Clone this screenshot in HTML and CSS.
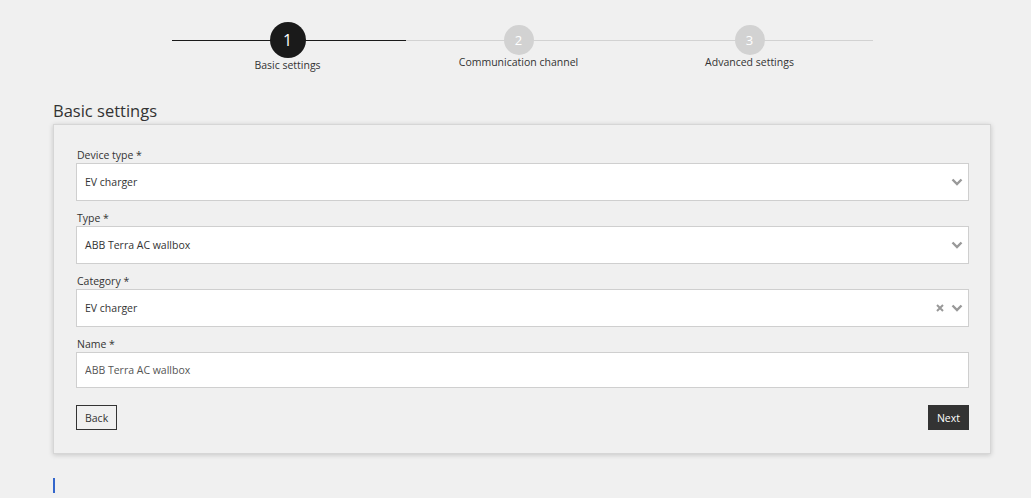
FILE: index.html
```html
<!DOCTYPE html>
<html lang="en">
<head>
<meta charset="UTF-8">
<meta name="viewport" content="width=device-width, initial-scale=1.0">
<title>Add device</title>
<link rel="stylesheet" href="styles.css">
</head>
<body>
    <div class="stepper">
        <div class="step active">
            <span class="dot">1</span>
            <span class="step-label">Basic settings</span>
        </div>
        <div class="step">
            <span class="dot">2</span>
            <span class="step-label">Communication channel</span>
        </div>
        <div class="step">
            <span class="dot">3</span>
            <span class="step-label">Advanced settings</span>
        </div>
    </div>

    <div class="page">
        <h2 class="title">Basic settings</h2>
        <div class="card">
            <div class="field">
                <label>Device type *</label>
                <div class="select">
                    <span>EV charger</span>
                    <span class="icons">
                        <svg class="chevron" width="12" height="8" viewBox="0 0 12 8"><path d="M1.5 1.5 L6 6 L10.5 1.5" fill="none" stroke="#999" stroke-width="2.4"/></svg>
                    </span>
                </div>
            </div>
            <div class="field">
                <label>Type *</label>
                <div class="select">
                    <span>ABB Terra AC wallbox</span>
                    <span class="icons">
                        <svg class="chevron" width="12" height="8" viewBox="0 0 12 8"><path d="M1.5 1.5 L6 6 L10.5 1.5" fill="none" stroke="#999" stroke-width="2.4"/></svg>
                    </span>
                </div>
            </div>
            <div class="field">
                <label>Category *</label>
                <div class="select">
                    <span>EV charger</span>
                    <span class="icons">
                        <svg class="clear" width="8" height="8" viewBox="0 0 8 8"><path d="M1 1 L7 7 M7 1 L1 7" fill="none" stroke="#999" stroke-width="2"/></svg>
                        <svg class="chevron" width="12" height="8" viewBox="0 0 12 8"><path d="M1.5 1.5 L6 6 L10.5 1.5" fill="none" stroke="#999" stroke-width="2.4"/></svg>
                    </span>
                </div>
            </div>
            <div class="field">
                <label>Name *</label>
                <input class="input" type="text" value="ABB Terra AC wallbox">
            </div>
            <div class="actions">
                <button class="btn">Back</button>
                <button class="btn primary">Next</button>
            </div>
        </div>
        <div class="caret"></div>
    </div>
</body>
</html>
```

FILE: styles.css
```css
:root {
    --bg-color: #f0f0f0;
    --text-color: #333;
    --line-color: #d2d2d2;
    --field-border: #cfcfcf;
}
body {
    margin: 0;
    background-color: var(--bg-color);
    font-family: "Open Sans", Arial, sans-serif;
    color: var(--text-color);
}
.stepper {
    position: relative;
    display: flex;
    width: 701px;
    margin: 22px 0 0 172px;
}
.stepper::before {
    content: "";
    position: absolute;
    top: 18px;
    left: 0;
    right: 0;
    height: 1px;
    background: var(--line-color);
}
.step {
    position: relative;
    width: 231px;
    display: flex;
    flex-direction: column;
    align-items: center;
}
.step.active::before {
    content: "";
    position: absolute;
    top: 18px;
    left: 0;
    width: 234px;
    height: 1px;
    background: #1a1a1a;
}
.dot {
    position: relative;
    width: 30px;
    height: 30px;
    margin-top: 3px;
    border-radius: 50%;
    background: #d2d2d2;
    color: white;
    font-size: 13px;
    display: flex;
    justify-content: center;
    align-items: center;
}
.active .dot {
    width: 36px;
    height: 36px;
    margin-top: 0;
    background: #1a1a1a;
    font-size: 16px;
}
.step-label {
    font-size: 10.5px;
    line-height: 14px;
    color: #333;
}
.page {
    width: 938px;
    margin: 0 0 0 53px;
}
.title {
    margin: 27px 0 1px;
    font-size: 16.5px;
    font-weight: normal;
    line-height: 24px;
    color: #333;
}
.card {
    border: 1px solid #d6d6d6;
    box-shadow: 0 1px 5px rgba(0, 0, 0, 0.18);
    padding: 22px 21px 23px 22px;
}
.field {
    margin-bottom: 9px;
}
.field label {
    display: block;
    padding-left: 1px;
    font-size: 10.5px;
    line-height: 16px;
}
.select, .input {
    box-sizing: border-box;
    width: 100%;
    height: 38px;
    background: white;
    border: 1px solid var(--field-border);
    font-family: inherit;
    font-size: 10.5px;
    color: #333;
}
.select {
    display: flex;
    justify-content: space-between;
    align-items: center;
    padding: 0 5px 0 8px;
}
.icons {
    display: flex;
    align-items: center;
    gap: 7px;
}
.input {
    display: block;
    height: 36px;
    padding: 0 8px;
    color: #555;
    outline: none;
}
.actions {
    display: flex;
    justify-content: space-between;
    margin-top: 17px;
}
.btn {
    height: 25px;
    padding: 0 8px;
    font-family: inherit;
    font-size: 10.5px;
    background: transparent;
    color: #333;
    border: 1px solid #333;
    border-radius: 0;
    cursor: pointer;
}
.btn.primary {
    background: #333;
    color: white;
}
.caret {
    width: 2px;
    height: 15px;
    margin-top: 24px;
    background: #3366cc;
}
```
